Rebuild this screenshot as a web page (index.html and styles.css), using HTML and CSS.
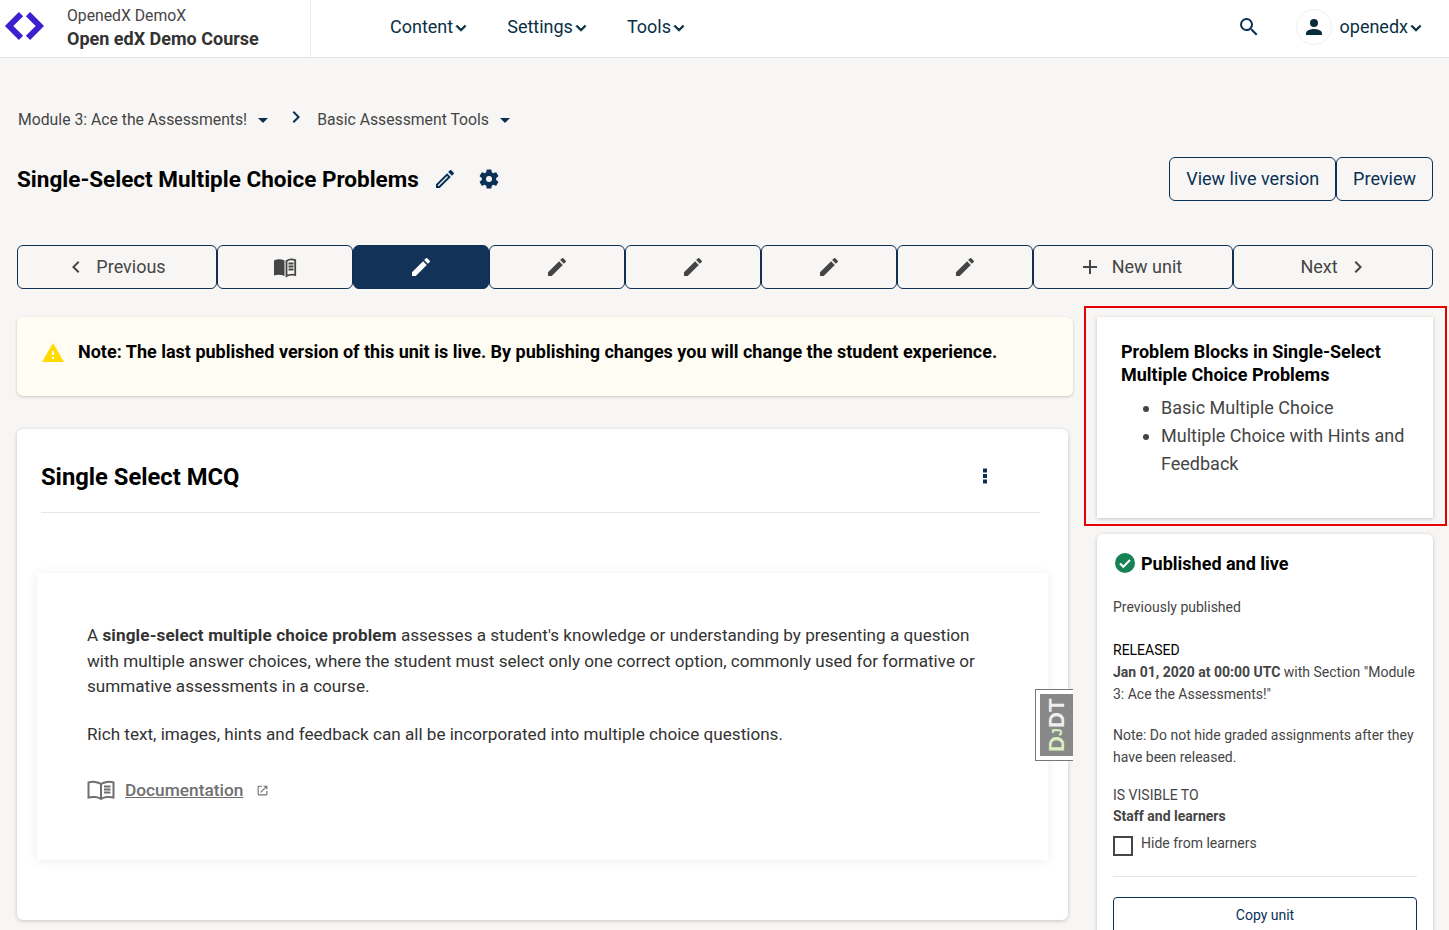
FILE: index.html
```html
<!DOCTYPE html>
<html lang="en">
<head>
    <meta charset="UTF-8">
    <title>Single-Select Multiple Choice Problems</title>
    <link rel="stylesheet" href="styles.css">
</head>
<body>
    <svg class="icon-defs" width="0" height="0">
        <symbol id="pencil" viewBox="0 0 24 24"><path d="M3 17.25V21h3.75L17.81 9.94l-3.75-3.75L3 17.25zM20.71 7.04a1 1 0 0 0 0-1.41l-2.34-2.34a1 1 0 0 0-1.41 0l-1.83 1.83 3.75 3.75 1.83-1.83z"/></symbol>
        <symbol id="chevron" viewBox="0 0 24 24"><path d="M7.41 8.59 12 13.17l4.59-4.58L18 10l-6 6-6-6z"/></symbol>
    </svg>

    <header class="topbar">
        <div class="brand">
            <svg class="logo" viewBox="0 0 40 30"><path d="M17 3.2 5.2 15 17 26.800M24 3.200 35.800 15 24 26.800" fill="none" stroke="#3c1fd1" stroke-width="6"/></svg>
            <div class="brand-text">
                <div class="org">OpenedX DemoX</div>
                <div class="course">Open edX Demo Course</div>
            </div>
        </div>
        <nav class="mainnav">
            <a>Content<svg class="chev"><use href="#chevron"/></svg></a>
            <a>Settings<svg class="chev"><use href="#chevron"/></svg></a>
            <a>Tools<svg class="chev"><use href="#chevron"/></svg></a>
        </nav>
        <div class="usernav">
            <svg class="search" viewBox="0 0 24 24"><path d="M15.5 14h-.79l-.28-.27A6.47 6.47 0 0 0 16 9.5 6.5 6.5 0 1 0 9.5 16c1.61 0 3.09-.59 4.23-1.57l.27.28v.79l5 4.99L20.49 19l-4.99-5zm-6 0C7.01 14 5 11.99 5 9.5S7.01 5 9.5 5 14 7.01 14 9.5 11.99 14 9.5 14z"/></svg>
            <span class="avatar"><svg viewBox="0 0 24 24"><path d="M12 12a4 4 0 1 0 0-8 4 4 0 0 0 0 8zm0 2c-2.67 0-8 1.34-8 4v2h16v-2c0-2.66-5.33-4-8-4z"/></svg></span>
            <a class="username">openedx<svg class="chev"><use href="#chevron"/></svg></a>
        </div>
    </header>

    <main class="page">
        <div class="breadcrumbs">
            <span>Module 3: Ace the Assessments!</span><i class="caret"></i>
            <svg class="crumb-sep" viewBox="0 0 24 24"><path d="M10 6 8.59 7.41 13.17 12l-4.58 4.59L10 18l6-6z"/></svg>
            <span>Basic Assessment Tools</span><i class="caret"></i>
        </div>

        <div class="title-row">
            <h1>Single-Select Multiple Choice Problems</h1>
            <svg class="title-edit" viewBox="0 0 24 24"><path d="M14.06 9.02l.92.92L5.92 19H5v-.92l9.06-9.06M17.66 3c-.25 0-.51.1-.7.29l-1.83 1.83 3.75 3.75 1.83-1.83a1 1 0 0 0 0-1.41l-2.34-2.34c-.2-.2-.45-.29-.71-.29zm-3.6 3.19L3 17.25V21h3.75L17.81 9.94l-3.75-3.75z"/></svg>
            <svg class="title-gear" viewBox="0 0 24 24"><path d="M19.14 12.94c.04-.3.06-.61.06-.94s-.02-.64-.07-.94l2.03-1.58a.5.5 0 0 0 .12-.61l-1.92-3.32a.5.5 0 0 0-.59-.22l-2.39.96a7 7 0 0 0-1.62-.94l-.36-2.54a.48.48 0 0 0-.48-.41h-3.84a.48.48 0 0 0-.47.41l-.36 2.54c-.59.24-1.13.57-1.62.94l-2.39-.96a.5.5 0 0 0-.59.22L2.74 8.87a.48.48 0 0 0 .12.61l2.03 1.58c-.05.3-.09.63-.09.94s.02.64.07.94l-2.03 1.58a.5.5 0 0 0-.12.61l1.92 3.32c.12.22.37.29.59.22l2.39-.96c.5.38 1.03.7 1.62.94l.36 2.54c.05.24.24.41.48.41h3.84c.24 0 .44-.17.47-.41l.36-2.54a6.9 6.9 0 0 0 1.62-.94l2.39.96c.22.08.47 0 .59-.22l1.92-3.32a.46.46 0 0 0-.12-.61l-2.01-1.58zM12 15a3 3 0 1 1 0-6 3 3 0 0 1 0 6z"/></svg>
            <div class="title-actions">
                <a class="btn">View live version</a>
                <a class="btn">Preview</a>
            </div>
        </div>

        <div class="unit-nav">
            <a class="unit wide prev-unit">
                <svg class="nav-chev" viewBox="0 0 24 24"><path d="M15.41 7.41 14 6l-6 6 6 6 1.41-1.41L10.83 12z"/></svg>
                <span class="lbl-left">Previous</span>
            </a>
            <a class="unit">
                <svg class="unit-icon" viewBox="0 0 24 24">
                    <path d="M1 5.5C4 4 8 3.8 11.5 5.5V21C8 19.5 4 19.500 1 20.500z"/>
                    <path d="M13.5 6C16 4.200 19.800 4.200 22.200 5.200V20C19.500 19.300 16 19.500 13.500 21zM15.500 8.500h5M15.500 11.500h5M15.500 14.500h5" fill="none" stroke="#454545" stroke-width="1.8"/>
                </svg>
            </a>
            <a class="unit active"><svg class="unit-icon"><use href="#pencil"/></svg></a>
            <a class="unit"><svg class="unit-icon"><use href="#pencil"/></svg></a>
            <a class="unit"><svg class="unit-icon"><use href="#pencil"/></svg></a>
            <a class="unit"><svg class="unit-icon"><use href="#pencil"/></svg></a>
            <a class="unit"><svg class="unit-icon"><use href="#pencil"/></svg></a>
            <a class="unit wide new-unit">
                <svg class="nav-plus" viewBox="0 0 24 24"><path d="M19 13h-6v6h-2v-6H5v-2h6V5h2v6h6v2z"/></svg>
                <span class="lbl-left">New unit</span>
            </a>
            <a class="unit wide next-unit">
                <span class="lbl-right">Next</span>
                <svg class="nav-chev" viewBox="0 0 24 24"><path d="M10 6 8.59 7.41 13.17 12l-4.58 4.59L10 18l6-6z"/></svg>
            </a>
        </div>

        <div class="content-grid">
            <section class="left-col">
                <div class="alert">
                    <svg class="alert-icon" viewBox="0 0 24 24"><path fill="#ffd900" d="M1 21h22L12 2 1 21z"/><path fill="#fffdf3" d="M13 18h-2v-2h2v2zm0-4h-2v-4h2v4z"/></svg>
                    <p>Note: The last published version of this unit is live. By publishing changes you will change the student experience.</p>
                </div>

                <div class="xblock-card">
                    <div class="xblock-head">
                        <h2>Single Select MCQ</h2>
                        <svg class="kebab" viewBox="0 0 24 24"><path d="M10 4.5h4v4h-4zM10 10h4v4h-4zM10 15.5h4v4h-4z"/></svg>
                    </div>
                    <div class="xblock-body">
                        <p>A <b>single-select multiple choice problem</b> assesses a student's knowledge or understanding by presenting a question with multiple answer choices, where the student must select only one correct option, commonly used for formative or summative assessments in a course.</p>
                        <p>Rich text, images, hints and feedback can all be incorporated into multiple choice questions.</p>
                        <div class="doc-link">
                            <svg class="doc-book" viewBox="0 0 28 20"><path d="M14 4C11 1.6 5 1.4 1.5 2.5v15c3.500-1 9.500-.8 12.500 1.500 3-2.300 9-2.500 12.500-1.500v-15C23 1.400 17 1.600 14 4zm0 0v15M17 6.500h6.500M17 9.500h6.500M17 12.500h6.500" fill="none" stroke="#6f6f6f" stroke-width="2"/></svg>
                            <a>Documentation</a>
                            <svg class="doc-ext" viewBox="0 0 24 24"><path d="M19 19H5V5h6V3H5a2 2 0 0 0-2 2v14a2 2 0 0 0 2 2h14a2 2 0 0 0 2-2v-6h-2v6zM14 3v2h3.590l-9.830 9.830 1.410 1.410L19 6.410V10h2V3h-7z"/></svg>
                        </div>
                    </div>
                </div>
            </section>

            <aside class="right-col">
                <div class="highlight">
                    <div class="card tips">
                        <h3>Problem Blocks in Single-Select Multiple Choice Problems</h3>
                        <ul>
                            <li>Basic Multiple Choice</li>
                            <li>Multiple Choice with Hints and Feedback</li>
                        </ul>
                    </div>
                </div>

                <div class="card status">
                    <div class="status-head">
                        <svg class="check" viewBox="0 0 24 24"><circle cx="12" cy="12" r="10" fill="#178253"/><path d="M7 12.5l3.3 3.3L17 9" fill="none" stroke="#fff" stroke-width="2"/></svg>
                        <h3>Published and live</h3>
                    </div>
                    <p class="prev">Previously published</p>
                    <p class="released-label">RELEASED</p>
                    <p class="released"><b>Jan 01, 2020 at 00:00 UTC</b> with Section "Module 3: Ace the Assessments!"</p>
                    <p class="note">Note: Do not hide graded assignments after they have been released.</p>
                    <p class="vis-label">IS VISIBLE TO</p>
                    <p class="vis"><b>Staff and learners</b></p>
                    <label class="hide-row"><span class="box"></span>Hide from learners</label>
                    <hr>
                    <a class="copy">Copy unit</a>
                </div>
            </aside>
        </div>
    </main>

    <!-- debug toolbar handle -->
    <div class="djdt"><span>D<small>J</small><em>DT</em></span></div>
</body>
</html>
```

FILE: styles.css
```css
* {
    box-sizing: border-box;
}

html, body {
    height: 930px;
    overflow: hidden;
}

body {
    margin: 0;
    background-color: #f7f6f4;
    color: #454545;
    font-family: Roboto, "Liberation Sans", sans-serif;
    font-size: 18px;
    position: relative;
}

.icon-defs {
    position: absolute;
}

p, h1, h2, h3 {
    margin: 0;
}

/* Top bar */
.topbar {
    display: flex;
    align-items: center;
    height: 58px;
    background-color: #fff;
    border-bottom: 1px solid #e3e3e3;
}

.brand {
    display: flex;
    align-items: center;
    width: 311px;
    height: 57px;
    padding-left: 4px;
    border-right: 1px solid #eaeaea;
}

.logo {
    width: 40px;
    height: 30px;
    margin-right: 23px;
    margin-top: -6px;
}

.org {
    font-size: 15.75px;
    line-height: 24px;
    color: #454545;
    margin: -2px 0 -1px;
}

.course {
    font-size: 18px;
    line-height: 24px;
    font-weight: 700;
    color: #333;
}

.mainnav {
    display: flex;
    gap: 40px;
    margin-left: 79px;
    margin-top: -4px;
}

.mainnav a, .username {
    display: flex;
    align-items: center;
    color: #0a2f45;
}

.chev {
    width: 20px;
    height: 20px;
    margin: 3px -4px 0 -2px;
    fill: #0a2f45;
    stroke: #0a2f45;
    stroke-width: 1;
}

.usernav {
    display: flex;
    align-items: center;
    margin-left: auto;
    margin-top: -4px;
    padding-right: 27px;
}

.search {
    width: 24px;
    height: 24px;
    fill: #0a3055;
    margin-right: 35px;
}

.avatar {
    display: flex;
    align-items: center;
    justify-content: center;
    width: 36px;
    height: 36px;
    border-radius: 50%;
    border: 1px solid #f0f0f0;
    margin-right: 8px;
}

.avatar svg {
    width: 24px;
    height: 24px;
    fill: #0a2c3a;
}

/* Page */
.page {
    padding: 0 16px 0 17px;
}

.breadcrumbs {
    display: flex;
    align-items: center;
    height: 24px;
    margin-top: 49px;
    font-size: 15.75px;
    color: #454545;
    padding-left: 1px;
}

.caret {
    width: 0;
    height: 0;
    margin: 3px 0 0 11px;
    border-left: 5px solid transparent;
    border-right: 5px solid transparent;
    border-top: 5px solid #0a3055;
}

.crumb-sep {
    width: 24px;
    height: 24px;
    margin: -5px 9px 0 16px;
    fill: #0a3055;
}

.title-row {
    display: flex;
    align-items: center;
    height: 44px;
    margin-top: 26px;
}

h1 {
    font-size: 22.5px;
    line-height: 28px;
    font-weight: 700;
    color: #000;
}

.title-edit {
    width: 24px;
    height: 24px;
    margin-left: 14px;
    fill: #0a3055;
}

.title-gear {
    width: 24px;
    height: 24px;
    margin-left: 20px;
    fill: #0a3055;
}

.title-actions {
    display: flex;
    margin-left: auto;
}

.btn {
    display: block;
    height: 44px;
    padding: 0 16px;
    line-height: 42px;
    color: #0a3055;
    border: 1px solid #0a3055;
    border-radius: 6px;
}

/* Unit navigation */
.unit-nav {
    display: flex;
    margin-top: 44px;
}

.unit {
    display: flex;
    align-items: center;
    justify-content: center;
    width: 136px;
    height: 44px;
    border: 1px solid #0f3055;
    border-radius: 6px;
    color: #454545;
}

.unit.wide {
    width: 200px;
}

.unit.active {
    background-color: #123257;
}

.prev-unit {
    padding-right: 4px;
}

.new-unit {
    padding-right: 6px;
}

.next-unit {
    padding-left: 4px;
}

.unit-icon {
    width: 24px;
    height: 24px;
    fill: #454545;
}

.active .unit-icon {
    fill: #fff;
}

.nav-chev {
    width: 24px;
    height: 24px;
    fill: #454545;
}

.nav-plus {
    width: 24px;
    height: 24px;
    fill: #454545;
}

.lbl-left {
    margin: 0 0 2px 8px;
}

.new-unit .lbl-left {
    margin-left: 10px;
}

.lbl-right {
    margin: 0 8px 2px 0;
}

/* Content */
.content-grid {
    display: flex;
    align-items: flex-start;
    margin-top: 28px;
}

.left-col {
    width: 1056px;
    flex: none;
}

.alert {
    display: flex;
    height: 79px;
    padding: 23px 24px;
    background-color: #fffdf3;
    border-radius: 6px;
    box-shadow: 0 1px 3px rgba(0, 0, 0, .2);
    font-weight: 700;
    color: #000;
}

.alert p {
    line-height: 24px;
}

.alert-icon {
    width: 24px;
    height: 24px;
    margin: 1px 13px 0 0;
    flex: none;
}

.xblock-card {
    width: 1051px;
    height: 491px;
    margin-top: 33px;
    background-color: #fff;
    border-radius: 6px;
    box-shadow: 0 1px 4px rgba(0, 0, 0, .2);
}

.xblock-head {
    display: flex;
    align-items: center;
    justify-content: space-between;
    height: 84px;
    padding-top: 12px;
    margin: 0 28px 0 24px;
    border-bottom: 1px solid #e6e6e6;
}

h2 {
    font-size: 23.75px;
    line-height: 28px;
    font-weight: 700;
    color: #000;
}

.kebab {
    width: 24px;
    height: 24px;
    margin: -2px 43px 0 0;
    fill: #0a3055;
}

.xblock-body {
    width: 1011px;
    height: 287px;
    margin: 60px 0 0 20px;
    padding: 50px 60px 0 50px;
    box-shadow: 0 1px 10px rgba(0, 0, 0, .08);
}

.xblock-body p {
    font-size: 17.12px;
    line-height: 25.5px;
    margin-bottom: 22px;
    color: #333;
}

.xblock-body b {
    letter-spacing: .13px;
}

.doc-link {
    display: flex;
    align-items: center;
    margin-top: 33px;
    font-weight: 500;
    color: #6f6f6f;
}

.doc-link a {
    text-decoration: underline;
    font-size: 17.3px;
}

.doc-book {
    width: 28px;
    height: 20px;
    margin-right: 10px;
}

.doc-ext {
    width: 13px;
    height: 13px;
    margin-left: 13px;
    fill: #6f6f6f;
}

/* Sidebar */
.right-col {
    width: 336px;
    margin-left: 24px;
    flex: none;
}

.card {
    background-color: #fff;
    border-radius: 6px;
    box-shadow: 0 1px 4px rgba(0, 0, 0, .2);
}

.highlight {
    margin: -11px -14px 0 -13px;
    padding: 9px 12px 6px 11px;
    border: 2px solid #e60000;
}

.tips {
    height: 201px;
    padding: 23px 24px 24px;
    border-radius: 0;
}

.tips h3 {
    font-size: 18px;
    line-height: 23px;
    color: #000;
}

.tips ul {
    margin: 8px 0 0;
    padding-left: 40px;
}

.tips li {
    line-height: 28px;
}

.status {
    margin-top: 8px;
    height: 420px;
    padding: 15px 16px 16px;
    font-size: 14px;
}

.status-head {
    display: flex;
    align-items: center;
    height: 28px;
}

.check {
    width: 24px;
    height: 24px;
    margin-right: 4px;
}

.status h3 {
    font-size: 18px;
    color: #000;
}

.status p {
    line-height: 22px;
}

.prev {
    margin-top: 19px;
}

.released-label {
    margin-top: 21px;
    color: #000;
}

.note {
    margin-top: 19px;
}

.vis-label {
    margin-top: 16px;
}

.status .vis {
    margin-top: -1px;
}

.hide-row {
    display: flex;
    margin-top: 5px;
    line-height: 22px;
}

.box {
    width: 20px;
    height: 20px;
    margin: 4px 8px 0 0;
    border: 2px solid #454545;
}

.status hr {
    margin: 20px 0;
    border: 0;
    border-top: 1px solid #e6e6e6;
}

.copy {
    display: block;
    height: 44px;
    line-height: 34px;
    text-align: center;
    color: #0a3055;
    border: 1px solid #0a3055;
    border-radius: 4px;
}

/* Debug toolbar handle, sits over the page edge */
.djdt {
    position: absolute;
    top: 689px;
    left: 1035px;
    width: 38px;
    height: 72px;
    padding: 4px 0 4px 4px;
    background-color: #fff;
    border: 1px solid #777;
    border-right: 0;
}

.djdt span {
    display: flex;
    align-items: center;
    justify-content: center;
    width: 33px;
    height: 62px;
    background-color: #888;
    color: #d9f0c0;
    font-family: "Liberation Sans", sans-serif;
    font-size: 22px;
    font-weight: 700;
    writing-mode: vertical-rl;
    transform: rotate(180deg);
    white-space: nowrap;
}

.djdt small {
    font-size: 14px;
}

.djdt em {
    font-style: normal;
    color: #f0f0f0;
}
```
